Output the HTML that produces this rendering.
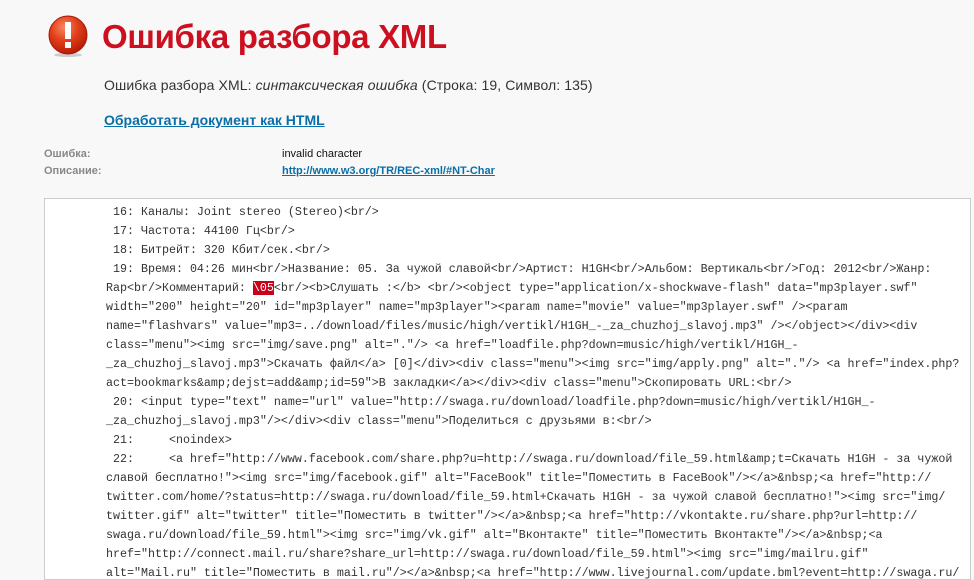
<!DOCTYPE html>
<html><head><meta charset="utf-8"><style>
body{margin:0;background:#f8f8f8;width:974px;height:574px;overflow:hidden;font-family:"Liberation Sans",Arial,sans-serif;position:relative}
.icon{position:absolute;left:47px;top:15px;width:42px;height:42px}
h1{position:absolute;left:102px;top:15px;margin:0;font-size:33px;font-weight:bold;color:#cc1020;letter-spacing:-0.3px;line-height:44px}
.msg{position:absolute;left:104px;top:77px;font-size:14px;color:#333;letter-spacing:0.1px}
.lnk{position:absolute;left:104px;top:112px;font-size:14px;font-weight:bold;color:#0a6ea8;text-decoration:underline}
.lab{position:absolute;left:44px;font-size:11px;font-weight:bold;color:#888}
.val{position:absolute;left:282px;font-size:11px;color:#111}
.box{position:absolute;left:44px;top:198px;width:925px;height:380px;background:#fff;border:1px solid #ccc;overflow:hidden}
pre{margin:0;padding:4px 0 0 61px;font-family:"Liberation Mono","DejaVu Sans Mono",monospace;font-size:11.67px;line-height:19px;color:#333;white-space:pre}
.err{background:#c8001a;color:#fff}
</style></head><body>
<svg class="icon" viewBox="0 0 42 42"><defs><radialGradient id="g" cx="40%" cy="30%" r="70%"><stop offset="0" stop-color="#f88a60"/><stop offset="0.5" stop-color="#e2401c"/><stop offset="1" stop-color="#b81c08"/></radialGradient></defs><ellipse cx="21" cy="40" rx="14" ry="2" fill="#ccc"/><circle cx="21" cy="20" r="19" fill="url(#g)" stroke="#a81808" stroke-width="1"/><rect x="18" y="7" width="6" height="17" fill="#fff"/><rect x="18" y="27" width="6" height="6" fill="#fff"/></svg>
<h1>Ошибка разбора XML</h1>
<div class="msg">Ошибка разбора XML: <i>синтаксическая ошибка</i> (Строка: 19, Символ: 135)</div>
<div class="lnk">Обработать документ как HTML</div>
<div class="lab" style="top:148px">Ошибка:</div><div class="val" style="top:148px">invalid character</div>
<div class="lab" style="top:165px">Описание:</div><div class="val" style="top:165px;color:#0a6ea8;font-weight:bold;text-decoration:underline">http://www.w3.org/TR/REC-xml/#NT-Char</div>
<div class="box"><pre> 16: Каналы: Joint stereo (Stereo)&lt;br/&gt;
 17: Частота: 44100 Гц&lt;br/&gt;
 18: Битрейт: 320 Кбит/сек.&lt;br/&gt;
 19: Время: 04:26 мин&lt;br/&gt;Название: 05. За чужой славой&lt;br/&gt;Артист: H1GH&lt;br/&gt;Альбом: Вертикаль&lt;br/&gt;Год: 2012&lt;br/&gt;Жанр:
Rap&lt;br/&gt;Комментарий: <span class="err">\05</span>&lt;br/&gt;&lt;b&gt;Слушать :&lt;/b&gt; &lt;br/&gt;&lt;object type="application/x-shockwave-flash" data="mp3player.swf"
width="200" height="20" id="mp3player" name="mp3player"&gt;&lt;param name="movie" value="mp3player.swf" /&gt;&lt;param
name="flashvars" value="mp3=../download/files/music/high/vertikl/H1GH_-_za_chuzhoj_slavoj.mp3" /&gt;&lt;/object&gt;&lt;/div&gt;&lt;div
class="menu"&gt;&lt;img src="img/save.png" alt="."/&gt; &lt;a href="loadfile.php?down=music/high/vertikl/H1GH_-
_za_chuzhoj_slavoj.mp3"&gt;Скачать файл&lt;/a&gt; [0]&lt;/div&gt;&lt;div class="menu"&gt;&lt;img src="img/apply.png" alt="."/&gt; &lt;a href="index.php?
act=bookmarks&amp;amp;dejst=add&amp;amp;id=59"&gt;В закладки&lt;/a&gt;&lt;/div&gt;&lt;div class="menu"&gt;Скопировать URL:&lt;br/&gt;
 20: &lt;input type="text" name="url" value="http://swaga.ru/download/loadfile.php?down=music/high/vertikl/H1GH_-
_za_chuzhoj_slavoj.mp3"/&gt;&lt;/div&gt;&lt;div class="menu"&gt;Поделиться с друзьями в:&lt;br/&gt;
 21:     &lt;noindex&gt;
 22:     &lt;a href="http://www.facebook.com/share.php?u=http://swaga.ru/download/file_59.html&amp;amp;t=Скачать H1GH - за чужой
славой бесплатно!"&gt;&lt;img src="img/facebook.gif" alt="FaceBook" title="Поместить в FaceBook"/&gt;&lt;/a&gt;&amp;nbsp;&lt;a href="http://
twitter.com/home/?status=http://swaga.ru/download/file_59.html+Скачать H1GH - за чужой славой бесплатно!"&gt;&lt;img src="img/
twitter.gif" alt="twitter" title="Поместить в twitter"/&gt;&lt;/a&gt;&amp;nbsp;&lt;a href="http://vkontakte.ru/share.php?url=http://
swaga.ru/download/file_59.html"&gt;&lt;img src="img/vk.gif" alt="Вконтакте" title="Поместить Вконтакте"/&gt;&lt;/a&gt;&amp;nbsp;&lt;a
href="http://connect.mail.ru/share?share_url=http://swaga.ru/download/file_59.html"&gt;&lt;img src="img/mailru.gif"
alt="Mail.ru" title="Поместить в mail.ru"/&gt;&lt;/a&gt;&amp;nbsp;&lt;a href="http://www.livejournal.com/update.bml?event=http://swaga.ru/</pre></div>
</body></html>
